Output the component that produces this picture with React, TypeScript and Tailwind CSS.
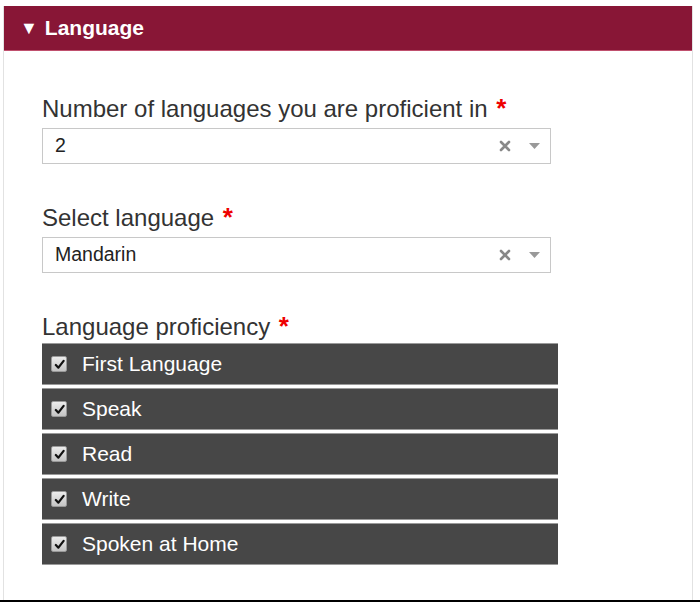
function Field({ label, value }: { label: string; value: string }) {
  return (
    <div>
      <label className="block text-[24px] leading-[28px] text-[#333]">
        {label} <span className="ml-[2px] text-[26px] font-bold text-[#e00]">*</span>
      </label>
      <div className="mt-[5px] flex h-[36px] w-[509px] items-center border border-[#c8c8c8] bg-white pl-[12px] pr-[10px]">
        <span className="flex-1 text-[19.5px] text-[#222]">{value}</span>
        <svg className="h-[12px] w-[12px] text-[#888]" viewBox="0 0 12 12">
          <path d="M2 2l8 8M10 2l-8 8" stroke="currentColor" strokeWidth={2.6} strokeLinecap="round" />
        </svg>
        <svg className="ml-[18px] h-[6px] w-[11px] text-[#999]" viewBox="0 0 11 6">
          <path d="M0 0h11L5.5 6z" fill="currentColor" />
        </svg>
      </div>
    </div>
  );
}

function CheckRow({ label }: { label: string }) {
  return (
    <div className="flex h-[42px] items-center border-y border-[#9a9a9a] bg-[#474747] pl-[9px]">
      <span className="flex h-[16px] w-[16px] items-center justify-center rounded-[2px] border border-[#999] bg-gradient-to-b from-[#ececec] to-[#c4c4c4]">
        <svg className="h-[11px] w-[11px]" viewBox="0 0 12 12">
          <path d="M2 6.5l2.8 3L10.5 2" stroke="#111" strokeWidth={2.4} fill="none" strokeLinecap="round" strokeLinejoin="round" />
        </svg>
      </span>
      <span className="ml-[15px] text-[21px] text-white">{label}</span>
    </div>
  );
}

export default function App() {
  return (
    <div className="h-[602px] w-[700px] bg-white pt-[6px] font-[family-name:Liberation_Sans,Arial,sans-serif]">
      <div className="ml-[3px] flex h-[594px] w-[690px] flex-col border-x border-[#e2e2e2]">
        <div className="flex h-[45px] items-center border-b border-[#c0506e] bg-[#881636] pl-[16px] text-white">
          <span className="text-[18px]">▼</span>
          <span className="ml-[7px] text-[21px] font-bold">Language</span>
        </div>
        <div className="flex flex-col pl-[38px] pt-[43px]">
          <Field label="Number of languages you are proficient in" value="2" />
          <div className="mt-[39px]">
            <Field label="Select language" value="Mandarin" />
          </div>
          <div className="mt-[39px]">
            <label className="block text-[24px] leading-[28px] text-[#333]">
              Language proficiency <span className="ml-[2px] text-[26px] font-bold text-[#e00]">*</span>
            </label>
            <div className="mt-[2px] flex w-[516px] flex-col gap-[3px]">
              {["First Language", "Speak", "Read", "Write", "Spoken at Home"].map((l) => (
                <CheckRow key={l} label={l} />
              ))}
            </div>
          </div>
        </div>
      </div>
      <div className="h-[2px] w-full bg-black" />
    </div>
  );
}
